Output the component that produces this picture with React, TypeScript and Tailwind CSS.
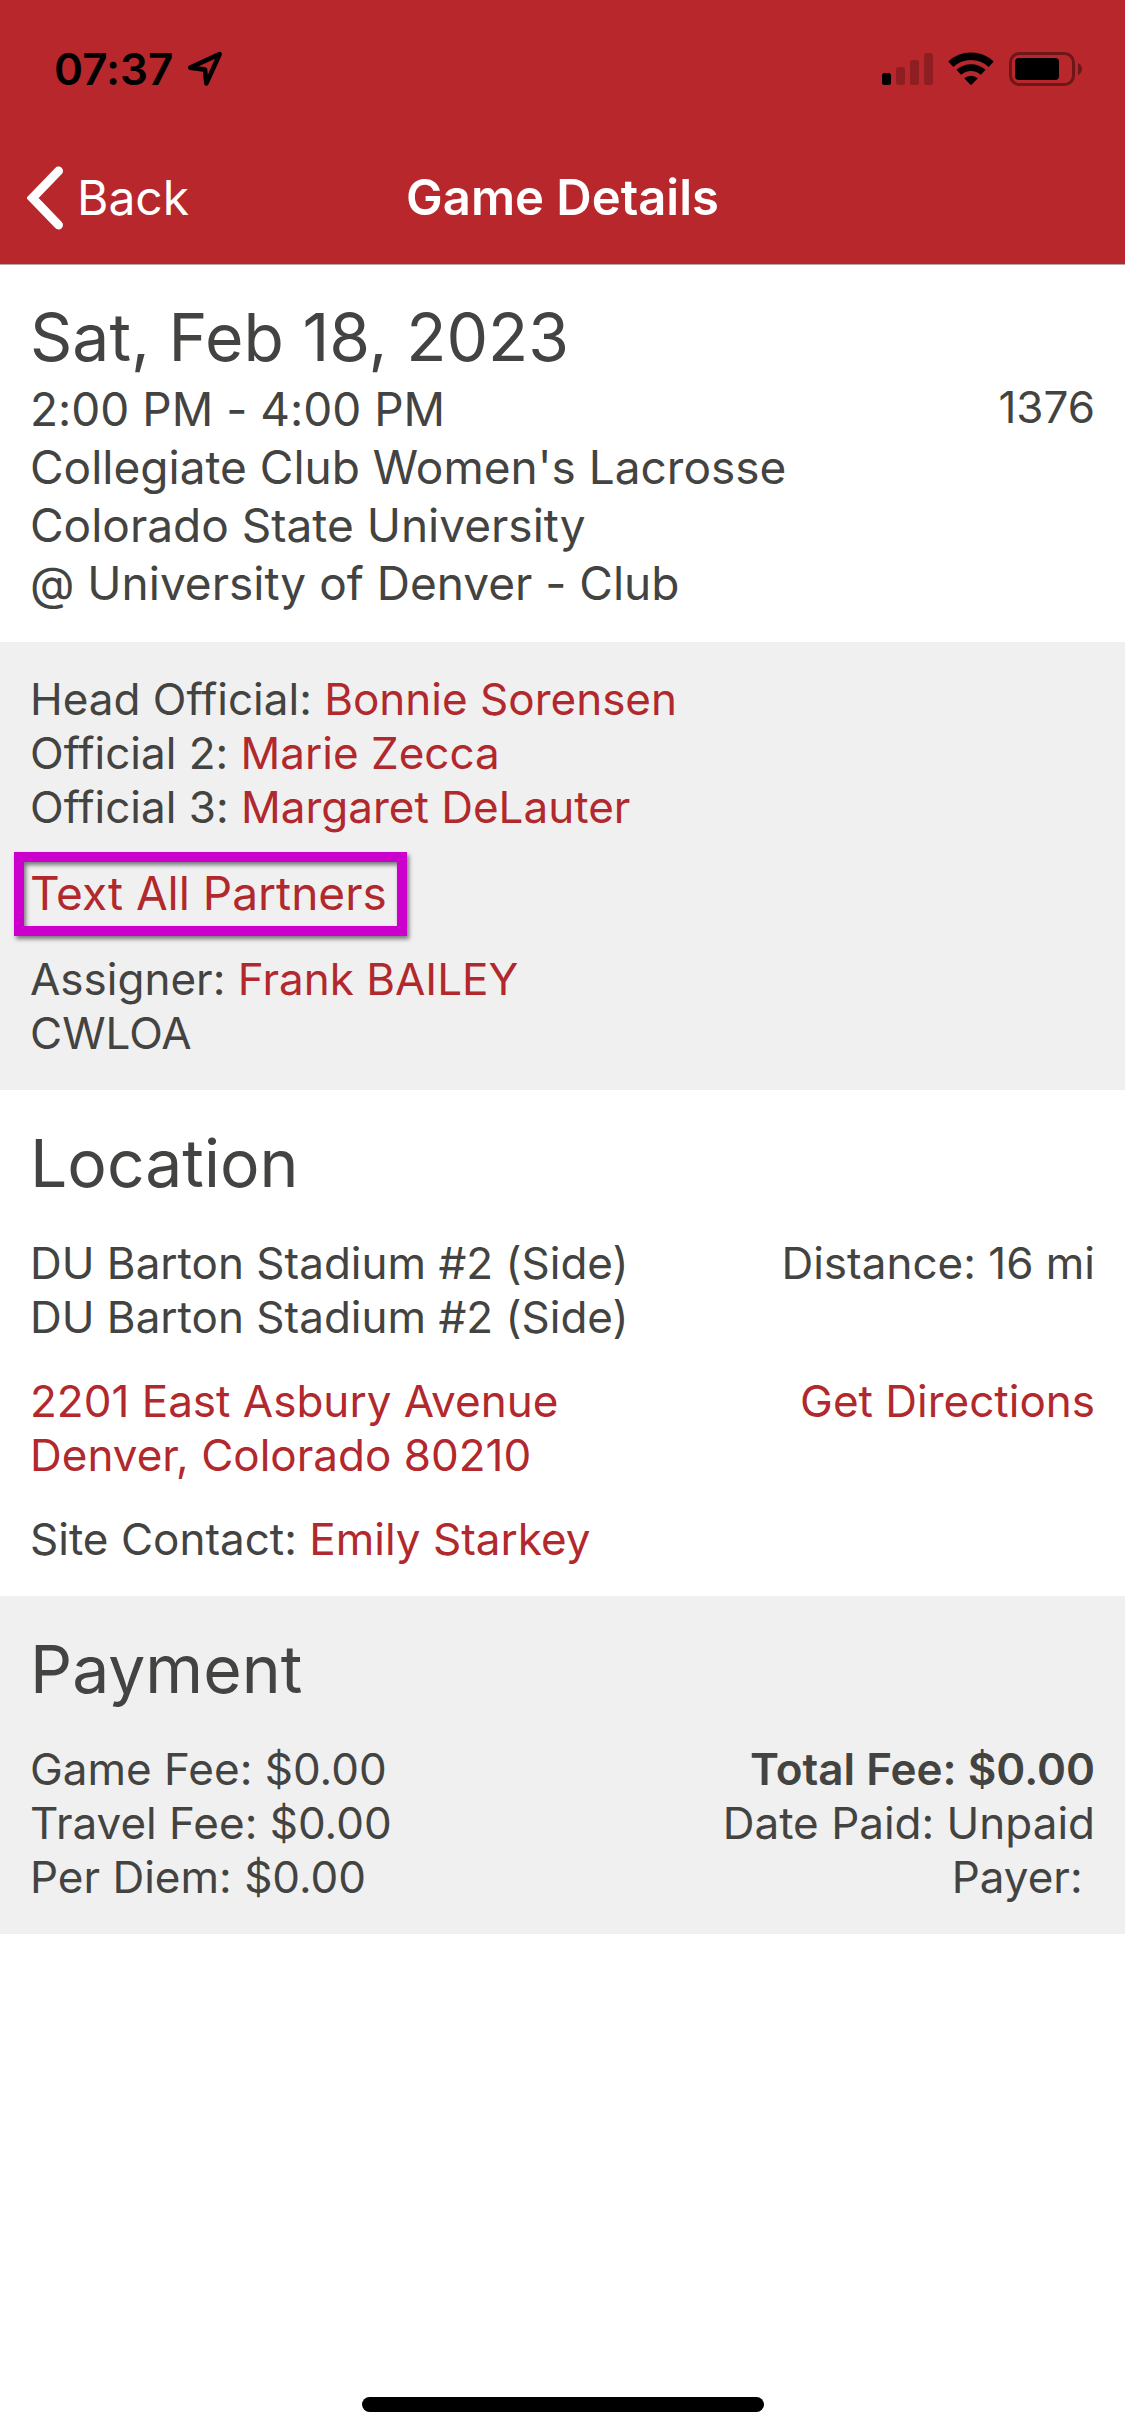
import React from 'react';

interface Official {
  role: string;
  name: string;
}

const matchup = [
  '2:00 PM - 4:00 PM',
  "Collegiate Club Women's Lacrosse",
  'Colorado State University',
  '@ University of Denver - Club',
];

const officials: Official[] = [
  { role: 'Head Official', name: 'Bonnie Sorensen' },
  { role: 'Official 2', name: 'Marie Zecca' },
  { role: 'Official 3', name: 'Margaret DeLauter' },
];

const fees = [
  { label: 'Game Fee', amount: '$0.00' },
  { label: 'Travel Fee', amount: '$0.00' },
  { label: 'Per Diem', amount: '$0.00' },
];

function StatusBar() {
  return (
    <div className="flex h-[132px] items-center justify-between pt-1.5 pr-[43px] pl-[54px] text-black">
      <div className="flex items-center gap-3.5">
        <span className="text-[44px] leading-[54px] font-semibold">07:37</span>
        <svg width="36" height="36" viewBox="0 0 36 36" fill="none" stroke="currentColor" strokeWidth="4.6" strokeLinejoin="round">
          <path d="M3.2 16.6 L32.6 3.2 L19.4 32.4 L18 18.6 Z" />
        </svg>
      </div>

      <div className="flex items-center">
        {/* Cellular */}
        <svg className="mr-[15px]" width="51" height="34" viewBox="0 0 51 34" fill="currentColor">
          <rect x="0" y="21" width="9" height="12" rx="2.5" />
          <g opacity="0.22">
            <rect x="14" y="15" width="9" height="18" rx="2.5" />
            <rect x="28" y="8" width="9" height="25" rx="2.5" />
            <rect x="42" y="1" width="9" height="32" rx="2.5" />
          </g>
        </svg>
        {/* Wi-Fi */}
        <svg className="mr-[15px]" width="46" height="34" viewBox="0 0 46 34" fill="none">
          <path d="M2.8 12.2 A29.5 29.5 0 0 1 43.2 12.2" stroke="currentColor" strokeWidth="7.4" />
          <path d="M10.8 20.3 A18 18 0 0 1 35.2 20.3" stroke="currentColor" strokeWidth="6.8" />
          <path d="M16.2 26.2 A10.5 10.5 0 0 1 29.8 26.2 L23.8 32.4 Q23 33.2 22.2 32.4 Z" fill="currentColor" />
        </svg>
        {/* Battery */}
        <svg width="73" height="34" viewBox="0 0 73 34" fill="currentColor">
          <rect x="1.5" y="1.5" width="63" height="31" rx="9" fill="none" stroke="currentColor" strokeWidth="3" opacity="0.4" />
          <rect x="6" y="6" width="44" height="22" rx="4" />
          <path d="M69 11 Q73 13 73 17 Q73 21 69 23 Z" opacity="0.4" />
        </svg>
      </div>
    </div>
  );
}

function NavBar() {
  return (
    <div className="grid h-[132px] grid-cols-[1fr_auto_1fr] items-center px-[27px] text-white">
      <button type="button" className="flex items-center gap-3.5 justify-self-start text-[48px] leading-[60px]">
        <svg width="36" height="64" viewBox="0 0 36 64" fill="none" stroke="currentColor" strokeWidth="9" strokeLinecap="round">
          <path d="M31.5 5 L5.5 32 L31.5 59" />
        </svg>
        Back
      </button>
      <h1 className="text-[49px] leading-[60px] font-semibold">Game Details</h1>
    </div>
  );
}

function TextLink({ children }: { children: React.ReactNode }) {
  return (
    <a href="#" className="text-[#b1282d]">
      {children}
    </a>
  );
}

export default function App() {
  return (
    <div className="flex min-h-screen flex-col bg-white font-[Inter,'Liberation_Sans',sans-serif] text-[44px] leading-[54px] text-[#434341] [font-variant-ligatures:none]">
      <header className="bg-[#b7272b] shadow-[0_1px_0_#b9a5a5]">
        <StatusBar />
        <NavBar />
      </header>

      <main>
        {/* Game */}
        <section className="p-[30px]">
          <h2 className="text-[66px] leading-[86px]">Sat, Feb 18, 2023</h2>
          <div className="flex items-start justify-between">
            <div className="text-[46px] leading-[58px]">
              {matchup.map((line) => (
                <p key={line}>{line}</p>
              ))}
            </div>
            <p>1376</p>
          </div>
        </section>

        {/* Officials */}
        <section className="bg-[#f0f0f0] p-[30px]">
          {officials.map((official) => (
            <p key={official.role}>
              {official.role}: <TextLink>{official.name}</TextLink>
            </p>
          ))}
          <button type="button" className="relative my-[30px] block text-[46px] leading-[58px] text-[#b1282d]">
            Text All Partners
            <span className="absolute -top-3 -right-5 -bottom-3.5 -left-4 border-10 border-[#cc00cc] drop-shadow-[2px_3px_2px_rgba(0,0,0,0.5)]" />
          </button>
          <p>
            Assigner: <TextLink>Frank BAILEY</TextLink>
          </p>
          <p>CWLOA</p>
        </section>

        {/* Location */}
        <section className="p-[30px]">
          <h2 className="text-[66px] leading-[86px]">Location</h2>
          <div className="mt-[30px] flex justify-between">
            <div>
              <p>DU Barton Stadium #2 (Side)</p>
              <p>DU Barton Stadium #2 (Side)</p>
            </div>
            <p>Distance: 16 mi</p>
          </div>
          <div className="mt-[30px] flex items-start justify-between">
            <TextLink>
              2201 East Asbury Avenue
              <br />
              Denver, Colorado 80210
            </TextLink>
            <TextLink>Get Directions</TextLink>
          </div>
          <p className="mt-[30px]">
            Site Contact: <TextLink>Emily Starkey</TextLink>
          </p>
        </section>

        {/* Payment */}
        <section className="bg-[#f0f0f0] p-[30px]">
          <h2 className="text-[66px] leading-[86px]">Payment</h2>
          <div className="mt-[30px] flex justify-between">
            <div>
              {fees.map((fee) => (
                <p key={fee.label}>
                  {fee.label}: {fee.amount}
                </p>
              ))}
            </div>
            <div className="text-right">
              <p className="font-semibold">Total Fee: $0.00</p>
              <p>Date Paid: Unpaid</p>
              <p>Payer:&nbsp;</p>
            </div>
          </div>
        </section>
      </main>

      {/* Home indicator */}
      <div className="mt-auto flex justify-center pb-6">
        <div className="h-[15px] w-[402px] rounded-full bg-black" />
      </div>
    </div>
  );
}
